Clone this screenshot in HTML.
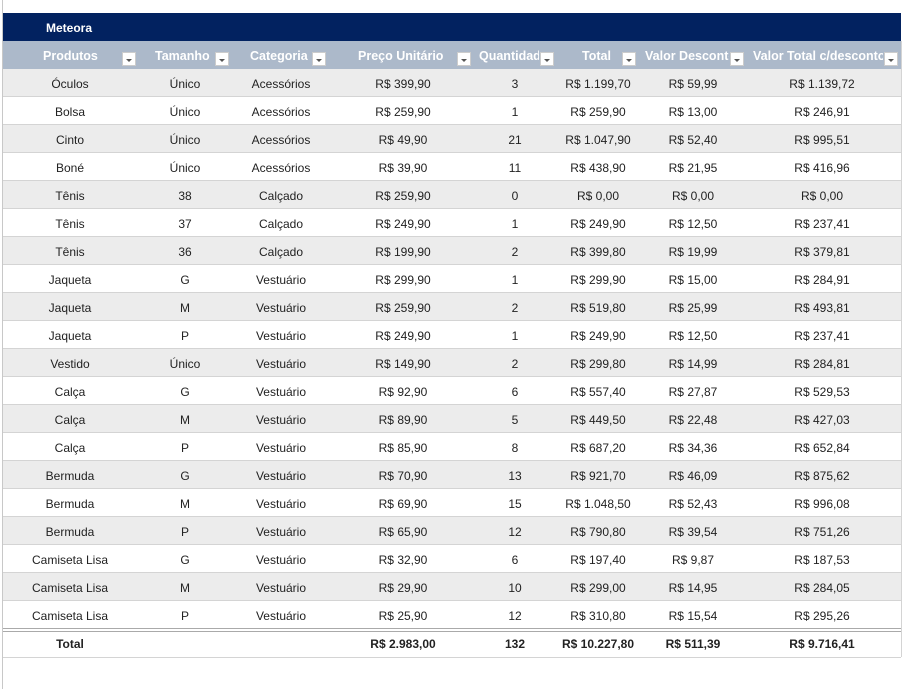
<!DOCTYPE html>
<html><head><meta charset="utf-8"><style>
body{margin:0;width:924px;height:689px;background:#fff;position:relative;overflow:hidden;font-family:"Liberation Sans",sans-serif;font-size:12px;color:#222}
.vl{position:absolute;left:2px;top:0;width:1px;height:689px;background:#c8c8c8}
.title{position:absolute;left:3px;top:13px;width:898px;height:28px;background:#022260;color:#fff;font-weight:bold;font-size:12px}
.title span{position:absolute;left:43px;top:8px}
.hdr{position:absolute;left:3px;top:41px;width:898px;height:28px;background:#acb9ca;color:#fff;font-weight:bold;font-size:12.5px}
.hdr span{position:absolute;top:8px;white-space:nowrap}
.dd{position:absolute;top:11px;width:14px;height:14px;background:#fff;border:1px solid #ccc;box-sizing:border-box}
.dd:after{content:"";position:absolute;left:3px;top:6px;border-left:3px solid transparent;border-right:3px solid transparent;border-top:3px solid #555}
.row{position:absolute;left:3px;width:898px;height:28px;border-bottom:1px solid #d4d4d4;box-sizing:border-box}
.row.g{background:#ececec}
.c{position:absolute;top:8px;width:160px;text-align:center;white-space:nowrap}
.tot{font-weight:bold}
.rl{position:absolute;left:901px;top:41px;width:1px;height:616px;background:#d4d4d4}
</style></head><body>
<div class="vl"></div>
<div class="title"><span>Meteora</span></div>
<div class="hdr">
<span style="left:40px">Produtos</span><div class="dd" style="left:119px"></div>
<span style="left:152px">Tamanho</span><div class="dd" style="left:212px"></div>
<span style="left:247px">Categoria</span><div class="dd" style="left:309px"></div>
<span style="left:355px">Preço Unitário</span><div class="dd" style="left:454px"></div>
<span style="left:476px;width:60px;overflow:hidden">Quantidade</span><div class="dd" style="left:537px"></div>
<span style="left:579px">Total</span><div class="dd" style="left:619px"></div>
<span style="left:642px;width:84px;overflow:hidden">Valor Desconto</span><div class="dd" style="left:727px"></div>
<span style="left:750px;width:130px;overflow:hidden">Valor Total c/desconto</span><div class="dd" style="left:881px"></div>
</div>
<div class="rl"></div>
<div id="rows"></div>
<script>
var d=[["Óculos","Único","Acessórios","R$ 399,90","3","R$ 1.199,70","R$ 59,99","R$ 1.139,72"],
["Bolsa","Único","Acessórios","R$ 259,90","1","R$ 259,90","R$ 13,00","R$ 246,91"],
["Cinto","Único","Acessórios","R$ 49,90","21","R$ 1.047,90","R$ 52,40","R$ 995,51"],
["Boné","Único","Acessórios","R$ 39,90","11","R$ 438,90","R$ 21,95","R$ 416,96"],
["Tênis","38","Calçado","R$ 259,90","0","R$ 0,00","R$ 0,00","R$ 0,00"],
["Tênis","37","Calçado","R$ 249,90","1","R$ 249,90","R$ 12,50","R$ 237,41"],
["Tênis","36","Calçado","R$ 199,90","2","R$ 399,80","R$ 19,99","R$ 379,81"],
["Jaqueta","G","Vestuário","R$ 299,90","1","R$ 299,90","R$ 15,00","R$ 284,91"],
["Jaqueta","M","Vestuário","R$ 259,90","2","R$ 519,80","R$ 25,99","R$ 493,81"],
["Jaqueta","P","Vestuário","R$ 249,90","1","R$ 249,90","R$ 12,50","R$ 237,41"],
["Vestido","Único","Vestuário","R$ 149,90","2","R$ 299,80","R$ 14,99","R$ 284,81"],
["Calça","G","Vestuário","R$ 92,90","6","R$ 557,40","R$ 27,87","R$ 529,53"],
["Calça","M","Vestuário","R$ 89,90","5","R$ 449,50","R$ 22,48","R$ 427,03"],
["Calça","P","Vestuário","R$ 85,90","8","R$ 687,20","R$ 34,36","R$ 652,84"],
["Bermuda","G","Vestuário","R$ 70,90","13","R$ 921,70","R$ 46,09","R$ 875,62"],
["Bermuda","M","Vestuário","R$ 69,90","15","R$ 1.048,50","R$ 52,43","R$ 996,08"],
["Bermuda","P","Vestuário","R$ 65,90","12","R$ 790,80","R$ 39,54","R$ 751,26"],
["Camiseta Lisa","G","Vestuário","R$ 32,90","6","R$ 197,40","R$ 9,87","R$ 187,53"],
["Camiseta Lisa","M","Vestuário","R$ 29,90","10","R$ 299,00","R$ 14,95","R$ 284,05"],
["Camiseta Lisa","P","Vestuário","R$ 25,90","12","R$ 310,80","R$ 15,54","R$ 295,26"]];
var cx=[70,185,281,403,515,598,693,822],h="";
d.forEach(function(r,i){h+='<div class="row'+(i%2==0?' g':'')+'" style="top:'+(69+28*i)+'px">';
r.forEach(function(v,j){h+='<div class="c" style="left:'+(cx[j]-83)+'px">'+v+'</div>'});h+='</div>';});
h+='<div style="position:absolute;left:3px;top:628px;width:898px;height:4px;border-top:1px solid #aaa;border-bottom:1px solid #aaa;box-sizing:border-box"></div>';
h+='<div class="row tot" style="top:631px;height:27px">';
var t=["Total","","","R$ 2.983,00","132","R$ 10.227,80","R$ 511,39","R$ 9.716,41"];
t.forEach(function(v,j){h+='<div class="c" style="top:6px;left:'+(cx[j]-83)+'px">'+v+'</div>'});h+='</div>';
document.getElementById("rows").innerHTML=h;
</script>
</body></html>
